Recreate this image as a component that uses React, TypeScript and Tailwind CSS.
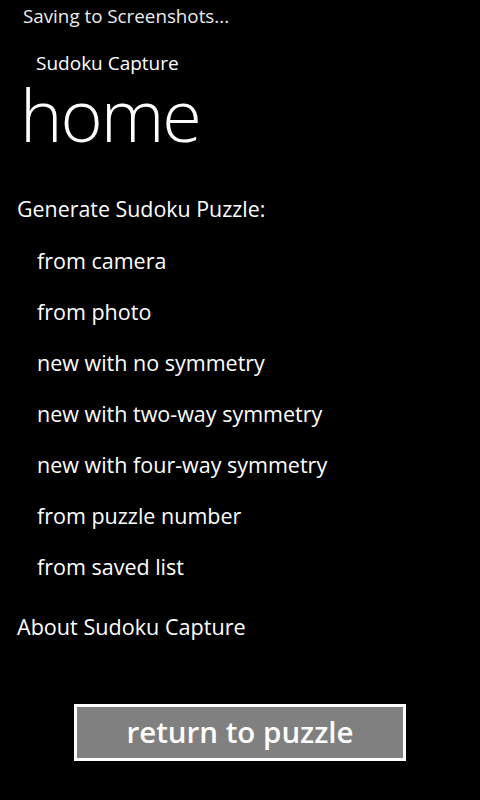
import React from "react";

const items = [
  "from camera",
  "from photo",
  "new with no symmetry",
  "new with two-way symmetry",
  "new with four-way symmetry",
  "from puzzle number",
  "from saved list",
];

export default function App() {
  return (
    <div
      className="w-[480px] h-[800px] bg-black text-white flex flex-col overflow-hidden"
      style={{ fontFamily: '"Open Sans", "Noto Sans", sans-serif' }}
    >
      <div className="h-[32px] pl-[23px] flex items-center text-[18.8px] text-[#ececec]">
        Saving to Screenshots...
      </div>
      <div className="h-[52px] pl-[36px] flex items-end pb-[11px] text-[19px] leading-none">
        Sudoku Capture
      </div>
      <div className="pl-[20px] h-[60px] flex items-center text-[72px] font-light leading-none tracking-[-2px]">
        home
      </div>
      <div className="h-[52px]" />
      <div className="pl-[17px] h-[26px] flex items-center text-[21.4px] leading-none">
        Generate Sudoku Puzzle:
      </div>
      <div className="flex flex-col pt-[13px]">
        {items.map((t) => (
          <div key={t} className="pl-[37px] h-[51px] flex items-center text-[21.5px] leading-none">
            {t}
          </div>
        ))}
      </div>
      <div className="pl-[17px] h-[70px] flex items-center text-[21.6px] leading-none">
        About Sudoku Capture
      </div>
      <div className="flex pl-[74px] pt-[42px]">
        <div className="w-[332px] h-[57px] border-[3px] border-white bg-[#808080] flex items-center justify-center text-[29.5px] font-semibold leading-none pb-[2px]">
          return to puzzle
        </div>
      </div>
    </div>
  );
}
